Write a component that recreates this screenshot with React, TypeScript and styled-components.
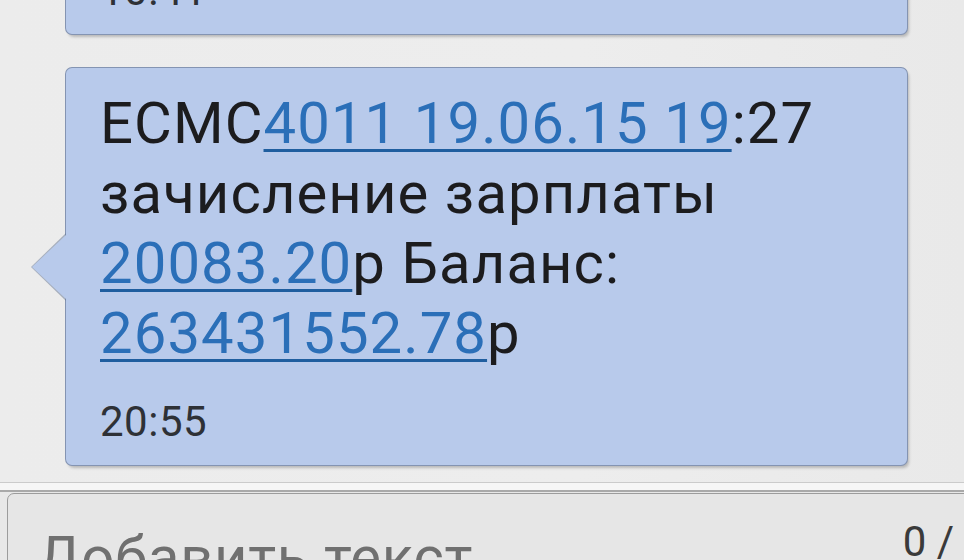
import React from "react";
import styled, { createGlobalStyle } from "styled-components";

interface Part {
  text: string;
  link?: boolean;
}

interface Message {
  id: string;
  lines: Part[][];
  time: string;
  tail?: boolean;
}

const GlobalStyle = createGlobalStyle`
  html, body {
    margin: 0;
    padding: 0;
    background: #ebebeb;
  }
  body {
    font-family: Roboto, "Noto Sans", "DejaVu Sans", sans-serif;
  }
`;

const Screen = styled.div`
  width: 964px;
  height: 560px;
  display: flex;
  flex-direction: column;
  overflow: hidden;
  background: linear-gradient(90deg, #ececec 0%, #ededed 60%, #e9e9e9 100%);
`;

const MessageList = styled.div`
  flex: 1;
  min-height: 0;
  display: flex;
  flex-direction: column;
  justify-content: flex-end;
  gap: 32px;
  padding: 0 56px 16px 65px;
  overflow: hidden;
`;

const Bubble = styled.div<{ $tail?: boolean }>`
  position: relative;
  flex-shrink: 0;
  background: #b8caeb;
  border: 1px solid rgba(96, 112, 140, 0.6);
  border-radius: 7px;
  padding: 20px 34px 19px 34px;
  box-shadow: 2px 3px 3px -1px rgba(0, 0, 0, 0.22);

  ${(p) =>
    p.$tail &&
    `
    &::before,
    &::after {
      content: "";
      position: absolute;
      clip-path: polygon(100% 0, 0 50%, 100% 100%);
    }
    &::before {
      left: -35px;
      top: 165px;
      width: 35px;
      height: 68px;
      background: rgba(110, 124, 150, 0.55);
    }
    &::after {
      left: -34px;
      top: 166px;
      width: 35px;
      height: 66px;
      background: #b8caeb;
    }
  `}
`;

const Body = styled.div`
  font-size: 58px;
  line-height: 70px;
  color: #1c1c1e;
  letter-spacing: 1.1px;
  margin-bottom: 30px;
`;

const Line = styled.div`
  white-space: nowrap;
`;

const Link = styled.span`
  color: #2b6fb8;
  text-decoration: underline;
  text-decoration-color: #1f5e9f;
  text-decoration-thickness: 3px;
  text-underline-offset: 6px;
`;

const Time = styled.div`
  font-size: 42px;
  line-height: 48px;
  color: #2e3136;
  letter-spacing: 0.5px;
`;

const Divider = styled.div`
  flex-shrink: 0;
  height: 7px;
  background: #f6f6f6;
  border-top: 1px solid #cbcbcb;
  border-bottom: 2px solid #a9a9a9;
`;

const Composer = styled.div`
  flex-shrink: 0;
  height: 67px;
  display: flex;
  padding: 1px 0 0 7px;
  background: #e8e8e8;
  overflow: hidden;
`;

const InputBox = styled.div`
  flex: 0 0 990px;
  height: 110px;
  display: flex;
  justify-content: space-between;
  align-items: flex-start;
  box-sizing: border-box;
  border: 1px solid #9c9c9c;
  border-radius: 7px 7px 0 0;
  background: #e6e6e6;
  padding: 0 42px 0 29px;
`;

const Placeholder = styled.div`
  margin-top: 28px;
  font-size: 58px;
  line-height: 70px;
  color: #707070;
  letter-spacing: 0.7px;
  white-space: nowrap;
`;

const Counter = styled.div`
  margin-top: 23px;
  font-size: 42px;
  line-height: 50px;
  color: #3a3a3a;
  white-space: nowrap;
`;

const messages: Message[] = [
  {
    id: "1",
    lines: [],
    time: "10:41",
  },
  {
    id: "2",
    tail: true,
    lines: [
      [{ text: "ЕСМС" }, { text: "4011 19.06.15 19", link: true }, { text: ":27" }],
      [{ text: "зачисление зарплаты" }],
      [{ text: "20083.20", link: true }, { text: "р Баланс:" }],
      [{ text: "263431552.78", link: true }, { text: "р" }],
    ],
    time: "20:55",
  },
];

export default function App(): React.JSX.Element {
  return (
    <>
      <GlobalStyle />
      <Screen>
        <MessageList>
          {messages.map((msg) => (
            <Bubble key={msg.id} $tail={msg.tail}>
              {msg.lines.length > 0 && (
                <Body>
                  {msg.lines.map((line, i) => (
                    <Line key={i}>
                      {line.map((part, j) =>
                        part.link ? (
                          <Link key={j}>{part.text}</Link>
                        ) : (
                          <span key={j}>{part.text}</span>
                        )
                      )}
                    </Line>
                  ))}
                </Body>
              )}
              <Time>{msg.time}</Time>
            </Bubble>
          ))}
        </MessageList>
        <Divider />
        <Composer>
          <InputBox>
            <Placeholder>Добавить текст</Placeholder>
            <Counter>0 /</Counter>
          </InputBox>
        </Composer>
      </Screen>
    </>
  );
}
